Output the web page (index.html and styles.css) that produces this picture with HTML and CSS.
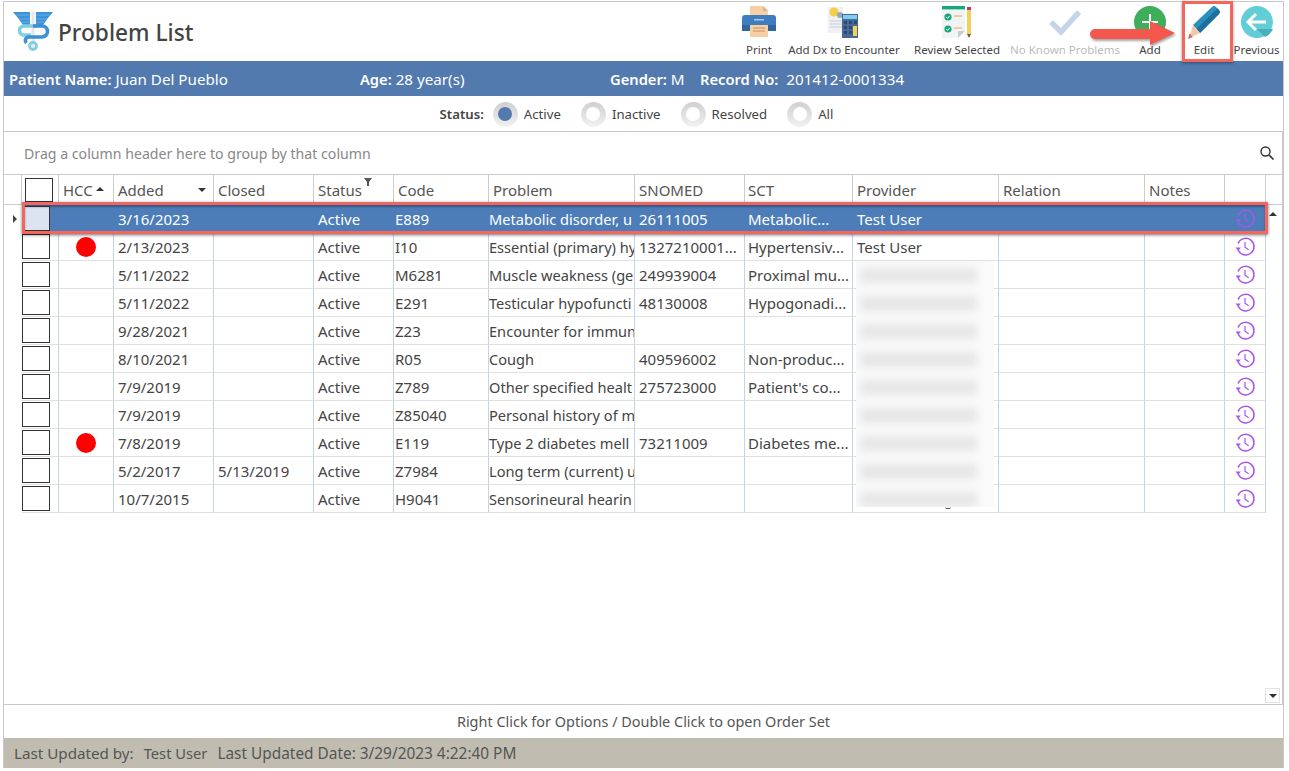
FILE: index.html
```html
<!DOCTYPE html>
<html lang="en">
<head>
<meta charset="utf-8">
<title>Problem List</title>
<link rel="stylesheet" href="styles.css">
</head>
<body>
<svg class="defs" width="0" height="0" aria-hidden="true">
  <symbol id="clock" viewBox="0 0 20 20">
    <path d="M3.2 13.2A8.3 8.3 0 1 0 3 6.5" fill="none" stroke="#a855f0" stroke-width="1.5"/>
    <path d="M0.6 10.6h5.2L3.2 14z" fill="#a855f0"/>
    <path d="M10 5v5.3l3.6 2.4" fill="none" stroke="#a855f0" stroke-width="1.2"/>
  </symbol>
</svg>
<div class="window">
  <header class="top">
    <div class="brand">
      <svg class="logo" width="40" height="40" viewBox="0 0 40 40">
        <path d="M0 1h17v13H10L5 7z" fill="#3d93d8"/>
        <path d="M40 1H23v13h7l5-7z" fill="#3d93d8"/>
        <path d="M3 4h14M6 8h11M9 11h8M37 4H23M34 8H23M31 11h-8" stroke="#7db9e8" stroke-width=".7"/>
        <rect x="18.500" y="1" width="3" height="36" fill="#e3e8ec"/>
        <path d="M24 15H11a4.500 4.500 0 0 0 0 9h7" fill="none" stroke="#7fcfe0" stroke-width="3.600"/>
        <path d="M20 15h9a5.500 5.500 0 0 1 0 11H15a3.500 3.500 0 0 0-1.500 6" fill="none" stroke="#3d8fd6" stroke-width="3.600"/>
        <circle cx="20" cy="35" r="3.500" fill="none" stroke="#7fcfe0" stroke-width="2.800"/>
      </svg>
      <h1 class="title">Problem List</h1>
    </div>
    <nav class="tools">
      <div class="tool tool-print">
        <svg width="34" height="32" viewBox="0 0 34 32">
          <path d="M8 0h13l5 5v8H8z" fill="#f6cfa4"/>
          <path d="M21 0l5 5h-5z" fill="#e0b184"/>
          <path d="M3 9h28a3 3 0 0 1 3 3v13H0V12a3 3 0 0 1 3-3z" fill="#3f7cc0"/>
          <rect x="0" y="19" width="34" height="6" fill="#31659f"/>
          <rect x="12" y="13" width="10" height="1.5" fill="#a9c8e8"/>
          <path d="M8 19h18v12H8z" fill="#f6cfa4"/>
          <path d="M11 22h12M11 25h12" stroke="#c48f5f" stroke-width="1.2"/>
        </svg>
        <span>Print</span>
      </div>
      <div class="tool tool-dx">
        <svg width="32" height="32" viewBox="0 0 32 32">
          <rect x="0" y="1" width="15" height="26" fill="#eef0f3"/>
          <circle cx="6" cy="6" r="4.5" fill="#f4cf45"/>
          <circle cx="12" cy="9" r="3" fill="#8fa9c4"/>
          <path d="M2 15h12M2 18h12M2 21h12" stroke="#c9cfd6" stroke-width="1"/>
          <rect x="14" y="8" width="16" height="24" fill="#47699a"/>
          <rect x="15" y="9" width="14" height="4" fill="#7ed0ee"/>
          <path d="M16 15h3v3h-3zM21 15h3v3h-3zM26 15h3v3h-3zM16 20h3v3h-3zM21 20h3v3h-3zM16 25h3v3h-3zM21 25h3v3h-3z" fill="#2e4a72"/>
          <rect x="25" y="20" width="4" height="10" fill="#f4d44d"/>
        </svg>
        <span>Add Dx to Encounter</span>
      </div>
      <div class="tool tool-review">
        <svg width="30" height="32" viewBox="0 0 30 32">
          <path d="M0 1h23v24l-7 7H0z" fill="#f2f3f4"/>
          <rect x="0" y="0" width="23" height="3" fill="#15a87a"/>
          <rect x="0" y="3" width="23" height="1" fill="#9ad7c2"/>
          <path d="M16 32v-7h7z" fill="#c9cdd2"/>
          <circle cx="6" cy="11" r="3.6" fill="#15a87a"/>
          <circle cx="6" cy="23" r="3.6" fill="#15a87a"/>
          <path d="M4.3 11l1.3 1.4 2.2-2.6M4.3 23l1.3 1.4 2.2-2.6" fill="none" stroke="#fff" stroke-width="1"/>
          <path d="M12 10h8M12 22h8" stroke="#f0a64c" stroke-width="1.2"/>
          <rect x="25" y="1" width="4" height="3" fill="#c2326b"/>
          <rect x="25" y="4" width="4" height="24" fill="#f3cf5c"/>
          <path d="M25 28h4l-2 4z" fill="#6d5a44"/>
        </svg>
        <span>Review Selected</span>
      </div>
      <div class="tool tool-known">
        <svg width="32" height="26" viewBox="0 0 32 26">
          <path d="M2 13l10 10L30 3" fill="none" stroke="#c5d5e8" stroke-width="5.5"/>
        </svg>
        <span>No Known Problems</span>
      </div>
      <div class="tool tool-add">
        <svg width="32" height="32" viewBox="0 0 32 32">
          <circle cx="16" cy="16" r="16" fill="#3fae5a"/>
          <path d="M16 8v16M8 16h16" stroke="#fff" stroke-width="2"/>
        </svg>
        <span>Add</span>
      </div>
      <div class="tool tool-edit">
        <svg width="34" height="33" viewBox="0 0 34 33">
          <path d="M6 19L25 1a3 3 0 0 1 4 0l3 3a3 3 0 0 1 0 4L13 27z" fill="#2a8fbf"/>
          <path d="M9.500 23L30.500 2.500 32 4a3 3 0 0 1 0 4L13 27z" fill="#1d6f9c"/>
          <path d="M6 19l7 8-11 5z" fill="#f3c9ae"/>
          <path d="M1 33l1.500-5.500 3.500 3.500z" fill="#d8695a"/>
        </svg>
        <span>Edit</span>
      </div>
      <div class="tool tool-prev">
        <svg width="32" height="32" viewBox="0 0 32 32">
          <circle cx="16" cy="16" r="16" fill="#62cdd6"/>
          <path d="M9 16l7 7h16a16 16 0 0 1-8 8z" fill="#4aafba"/>
          <path d="M15 8l-8 8 8 8M7.5 16H25" fill="none" stroke="#fff" stroke-width="3"/>
        </svg>
        <span>Previous</span>
      </div>
    </nav>
  </header>

  <section class="patient">
    <div class="pf pf-name"><b>Patient Name:</b> Juan Del Pueblo</div>
    <div class="pf pf-age"><b>Age:</b> 28 year(s)</div>
    <div class="pf pf-gender"><b>Gender:</b> M</div>
    <div class="pf pf-record"><b>Record No:</b> 201412-0001334</div>
  </section>

  <section class="status">
    <b class="status-label">Status:</b>
    <span class="radio on"></span><span class="rlabel">Active</span>
    <span class="radio"></span><span class="rlabel">Inactive</span>
    <span class="radio"></span><span class="rlabel">Resolved</span>
    <span class="radio"></span><span class="rlabel">All</span>
  </section>

  <section class="grid">
    <div class="group">
      <span>Drag a column header here to group by that column</span>
      <svg width="16" height="16" viewBox="0 0 16 16"><circle cx="6.5" cy="6.5" r="4.5" fill="none" stroke="#333" stroke-width="1.4"/><path d="M10 10l4.5 4.5" stroke="#333" stroke-width="1.6"/></svg>
    </div>
    <div class="row head">
      <div class="c sel"></div>
      <div class="c chk"><span class="box"></span></div>
      <div class="c">HCC<i class="up sm"></i></div>
      <div class="c added">Added<i class="down"></i></div>
      <div class="c">Closed</div>
      <div class="c">Status<svg class="filter" width="8" height="8" viewBox="0 0 8 8"><path d="M0 0h8L5 4v4H3V4z" fill="#555"/></svg></div>
      <div class="c">Code</div>
      <div class="c">Problem</div>
      <div class="c">SNOMED</div>
      <div class="c">SCT</div>
      <div class="c">Provider</div>
      <div class="c">Relation</div>
      <div class="c">Notes</div>
      <div class="c"></div>
    </div>
    <div class="body">
      <div class="row current">
        <div class="c sel"><i class="pointer"></i></div><div class="c chk"><span class="box"></span></div><div class="c"></div>
        <div class="c">3/16/2023</div><div class="c"></div><div class="c">Active</div><div class="c">E889</div><div class="c">Metabolic disorder, u</div><div class="c">26111005</div><div class="c">Metabolic...</div><div class="c">Test User</div><div class="c"></div><div class="c"></div>
        <div class="c ic"><svg width="20" height="20"><use href="#clock"/></svg></div>
      </div>
      <div class="row">
        <div class="c sel"></div><div class="c chk"><span class="box"></span></div><div class="c ic"><i class="dot"></i></div>
        <div class="c">2/13/2023</div><div class="c"></div><div class="c">Active</div><div class="c">I10</div><div class="c">Essential (primary) hy</div><div class="c">1327210001...</div><div class="c">Hypertensiv...</div><div class="c">Test User</div><div class="c"></div><div class="c"></div>
        <div class="c ic"><svg width="20" height="20"><use href="#clock"/></svg></div>
      </div>
      <div class="row">
        <div class="c sel"></div><div class="c chk"><span class="box"></span></div><div class="c"></div>
        <div class="c">5/11/2022</div><div class="c"></div><div class="c">Active</div><div class="c">M6281</div><div class="c">Muscle weakness (ge</div><div class="c">249939004</div><div class="c">Proximal mu...</div><div class="c"></div><div class="c"></div><div class="c"></div>
        <div class="c ic"><svg width="20" height="20"><use href="#clock"/></svg></div>
      </div>
      <div class="row">
        <div class="c sel"></div><div class="c chk"><span class="box"></span></div><div class="c"></div>
        <div class="c">5/11/2022</div><div class="c"></div><div class="c">Active</div><div class="c">E291</div><div class="c">Testicular hypofuncti</div><div class="c">48130008</div><div class="c">Hypogonadi...</div><div class="c"></div><div class="c"></div><div class="c"></div>
        <div class="c ic"><svg width="20" height="20"><use href="#clock"/></svg></div>
      </div>
      <div class="row">
        <div class="c sel"></div><div class="c chk"><span class="box"></span></div><div class="c"></div>
        <div class="c">9/28/2021</div><div class="c"></div><div class="c">Active</div><div class="c">Z23</div><div class="c">Encounter for immun</div><div class="c"></div><div class="c"></div><div class="c"></div><div class="c"></div><div class="c"></div>
        <div class="c ic"><svg width="20" height="20"><use href="#clock"/></svg></div>
      </div>
      <div class="row">
        <div class="c sel"></div><div class="c chk"><span class="box"></span></div><div class="c"></div>
        <div class="c">8/10/2021</div><div class="c"></div><div class="c">Active</div><div class="c">R05</div><div class="c">Cough</div><div class="c">409596002</div><div class="c">Non-produc...</div><div class="c"></div><div class="c"></div><div class="c"></div>
        <div class="c ic"><svg width="20" height="20"><use href="#clock"/></svg></div>
      </div>
      <div class="row">
        <div class="c sel"></div><div class="c chk"><span class="box"></span></div><div class="c"></div>
        <div class="c">7/9/2019</div><div class="c"></div><div class="c">Active</div><div class="c">Z789</div><div class="c">Other specified healt</div><div class="c">275723000</div><div class="c">Patient's co...</div><div class="c"></div><div class="c"></div><div class="c"></div>
        <div class="c ic"><svg width="20" height="20"><use href="#clock"/></svg></div>
      </div>
      <div class="row">
        <div class="c sel"></div><div class="c chk"><span class="box"></span></div><div class="c"></div>
        <div class="c">7/9/2019</div><div class="c"></div><div class="c">Active</div><div class="c">Z85040</div><div class="c">Personal history of m</div><div class="c"></div><div class="c"></div><div class="c"></div><div class="c"></div><div class="c"></div>
        <div class="c ic"><svg width="20" height="20"><use href="#clock"/></svg></div>
      </div>
      <div class="row">
        <div class="c sel"></div><div class="c chk"><span class="box"></span></div><div class="c ic"><i class="dot"></i></div>
        <div class="c">7/8/2019</div><div class="c"></div><div class="c">Active</div><div class="c">E119</div><div class="c">Type 2 diabetes mell</div><div class="c">73211009</div><div class="c">Diabetes me...</div><div class="c"></div><div class="c"></div><div class="c"></div>
        <div class="c ic"><svg width="20" height="20"><use href="#clock"/></svg></div>
      </div>
      <div class="row">
        <div class="c sel"></div><div class="c chk"><span class="box"></span></div><div class="c"></div>
        <div class="c">5/2/2017</div><div class="c">5/13/2019</div><div class="c">Active</div><div class="c">Z7984</div><div class="c">Long term (current) u</div><div class="c"></div><div class="c"></div><div class="c"></div><div class="c"></div><div class="c"></div>
        <div class="c ic"><svg width="20" height="20"><use href="#clock"/></svg></div>
      </div>
      <div class="row">
        <div class="c sel"></div><div class="c chk"><span class="box"></span></div><div class="c"></div>
        <div class="c">10/7/2015</div><div class="c"></div><div class="c">Active</div><div class="c">H9041</div><div class="c">Sensorineural hearin</div><div class="c"></div><div class="c"></div><div class="c"></div><div class="c"></div><div class="c"></div>
        <div class="c ic"><svg width="20" height="20"><use href="#clock"/></svg></div>
      </div>
      <div class="redact">
        <i></i><i></i><i></i><i></i><i></i><i></i><i></i><i></i><i></i>
      </div>
      <div class="tail"></div>
      <div class="row-mark"></div>
    </div>
    <div class="scroll-up"><i class="up"></i></div>
    <div class="scroll-down"><i class="down"></i></div>
  </section>

  <div class="hint">Right Click for Options / Double Click to open Order Set</div>
  <footer class="foot">
    <span>Last Updated by:</span><span>Test User</span><span>Last Updated Date: 3/29/2023 4:22:40 PM</span>
  </footer>

  <div class="edit-mark"></div>
  <svg class="arrow" width="92" height="34" viewBox="0 0 92 34">
    <path d="M5 13h55V5l25 12L60 29v-6H5a5 5 0 0 1 0-10z" fill="#f4574b"/>
  </svg>
</div>
</body>
</html>
```

FILE: styles.css
```css
* { box-sizing: border-box; }
html, body { margin: 0; padding: 0; background: #fff; }
body {
  width: 1289px;
  height: 771px;
  overflow: hidden;
  font-family: "Noto Sans", "Open Sans", sans-serif;
  font-size: 15px;
  color: #444;
}
.defs { position: absolute; }
.window {
  position: relative;
  margin: 1px 0 0 3px;
  width: 1281px;
  height: 767px;
  border: 1px solid #c8c8c8;
  border-bottom: 0;
  display: flex;
  flex-direction: column;
}
.top {
  height: 59px;
  flex: none;
  display: flex;
  justify-content: space-between;
}
.brand { display: flex; align-items: flex-start; padding: 9px 0 0 9px; }
.logo { flex: none; }
.title { margin: 6px 0 0 5px; font-size: 22.7px; font-weight: 500; color: #444; line-height: 32px; }
.tools { display: flex; align-items: flex-start; }
.tool {
  display: flex;
  flex-direction: column;
  align-items: center;
  height: 59px;
  font-size: 11.5px;
  color: #444;
  white-space: nowrap;
  position: relative;
}
.tool svg { position: absolute; top: 4px; left: 50%; transform: translateX(-50%); }
.tool span { position: absolute; top: 40px; left: 50%; transform: translateX(-50%); line-height: 16px; }
.tool-print { width: 36px; margin-right: 7px; }
.tool-dx { width: 120px; margin-right: 7px; }
.tool-review { width: 92px; margin-right: 4px; }
.tool-known { width: 116px; margin-right: 7px; color: #bbb; }
.tool-known svg { top: 7px; }
.tool-add { width: 40px; margin-right: 9px; }
.tool-edit { width: 50px; margin-right: 1px; }
.tool-prev { width: 53px; margin-right: 0; }

.patient {
  height: 35px;
  flex: none;
  background: #527aae;
  color: #fff;
  display: flex;
  align-items: center;
  padding-left: 5px;
  font-size: 15.2px;
  white-space: nowrap;
}
.pf b { font-weight: 600; font-size: 14.7px; }
.pf-name { width: 351px; }
.pf-age { width: 250px; }
.pf-gender { width: 90px; }
.pf-record b { margin-right: 4px; }

.status {
  height: 35px;
  flex: none;
  display: flex;
  align-items: center;
  justify-content: center;
  font-size: 13.2px;
  padding: 1px 14px 0 0;
}
.status-label { font-weight: 600; margin-right: 9px; font-size: 13.2px; }
.radio {
  width: 25px;
  height: 25px;
  border-radius: 50%;
  background: linear-gradient(#cfcfcf, #f2f2f2);
  display: flex;
  align-items: center;
  justify-content: center;
  margin-right: 6px;
}
.radio::before {
  content: "";
  width: 14px;
  height: 14px;
  border-radius: 50%;
  background: #fff;
}
.radio.on::before { background: #527aae; }
.rlabel { margin-right: 20px; }
.rlabel:last-child { margin-right: 0; }

.grid {
  position: relative;
  flex: none;
  height: 574px;
  border-top: 1px solid #c8c8c8;
  border-bottom: 1px solid #c8c8c8;
  border-right: 1px solid #c8c8c8;
}
.group {
  height: 43px;
  display: flex;
  align-items: center;
  justify-content: space-between;
  padding: 0 7px 0 20px;
  color: #888;
  font-size: 14.15px;
  border-bottom: 1px solid #ccc;
}
.row {
  display: grid;
  grid-template-columns: 18px 37px 55px 100px 100px 80px 95px 146px 110px 108px 146px 146px 80px 41px;
  height: 28px;
  width: 1262px;
  font-size: 15px;
}
.c {
  position: relative;
  display: flex;
  align-items: center;
  padding: 1px 0 0 4px;
  overflow: hidden;
  white-space: nowrap;
  border-right: 1px solid #c6d3e2;
  border-bottom: 1px solid #e0e0e0;
}
.row .c:first-child { border-right: 0; border-bottom: 0; }
.body .c:nth-child(7) { padding-left: 1px; }
.body .c:nth-child(8) { padding-left: 0; font-size: 14.6px; }
.row .c:nth-child(10) { padding-left: 3px; }
.head { height: 30px; border-bottom: 1px solid #ccc; color: #555; width: 1279px; grid-template-columns: 18px 37px 55px 100px 100px 80px 95px 146px 110px 108px 146px 146px 80px 41px 13px; }
.head .c { border-right: 1px solid #ccc; border-bottom: 0; }
.head .c:first-child { border-right: 1px solid #ccc; }
.chk { padding: 0; }
.box {
  display: block;
  width: 28px;
  height: 25px;
  border: 1px solid #333;
  background: #fff;
}
.head .chk { padding-left: 3px; }
.head .box { height: 24px; }
.up, .down { display: inline-block; width: 0; height: 0; border-left: 4px solid transparent; border-right: 4px solid transparent; }
.up { border-bottom: 4px solid #333; }
.down { border-top: 4px solid #333; }
.up.sm { margin: 0 0 2px 3px; }
.added { justify-content: space-between; padding-right: 7px; }
.filter { position: absolute; left: 50px; top: 3px; }
.ic { justify-content: center; padding: 0; overflow: visible; }
.dot { display: block; width: 20px; height: 20px; border-radius: 50%; background: #fe0000; }
.body { position: relative; }
.current { background: #4d7db8; color: #fff; }
.current .c { border-right-color: transparent; border-bottom-color: transparent; }
.current .sel { background: #fff; }
.current .box { background: #dbe4f0; }
.pointer { position: absolute; left: 9px; top: 10px; width: 0; height: 0; border-top: 4px solid transparent; border-bottom: 4px solid transparent; border-left: 4px solid #444; }
.row-mark {
  position: absolute;
  left: 18px;
  top: -3px;
  width: 1246px;
  height: 32px;
  border: 3px solid #f2665e;
  box-shadow: 0 1px 3px rgba(0, 0, 0, .55), inset 0 2px 2px rgba(20, 40, 70, .45);
  pointer-events: none;
}
.redact {
  position: absolute;
  left: 852px;
  top: 56px;
  width: 138px;
  height: 246px;
  background: #fafafa;
  display: flex;
  flex-direction: column;
  padding: 7px 17px 0 4px;
  gap: 13px;
  overflow: hidden;
}
.redact i { display: block; height: 15px; background: #e6e6e6; filter: blur(4px); flex: none; }
.tail {
  position: absolute;
  left: 941px;
  top: 302px;
  width: 6px;
  height: 2px;
  border-bottom: 1px solid #555;
  border-radius: 0 0 3px 3px;
}
.scroll-up, .scroll-down {
  position: absolute;
  right: 2px;
  width: 15px;
  height: 15px;
  display: flex;
  align-items: center;
  justify-content: center;
}
.scroll-up { top: 74px; }
.scroll-down { bottom: 1px; border: 1px solid #e2e2e2; }
.hint { height: 33px; flex: none; display: flex; align-items: center; justify-content: center; color: #555; font-size: 14.45px; }
.foot {
  height: 30px;
  flex: none;
  background: #c0bdb0;
  display: flex;
  align-items: center;
  padding-left: 10px;
  color: #555;
  font-size: 15.2px;
  white-space: nowrap;
}
.foot span:nth-child(1) { margin-right: 10px; }
.foot span:nth-child(2) { margin-right: 10px; font-size: 14.7px; }
.foot span:nth-child(3) { font-size: 15.4px; }
.edit-mark {
  position: absolute;
  left: 1178px;
  top: -1px;
  width: 51px;
  height: 61px;
  border: 3px solid #f2665e;
  box-shadow: 0 1px 3px rgba(0, 0, 0, .4);
}
.arrow { position: absolute; left: 1086px; top: 14px; filter: drop-shadow(1px 2px 1px rgba(0,0,0,.35)); }
```
